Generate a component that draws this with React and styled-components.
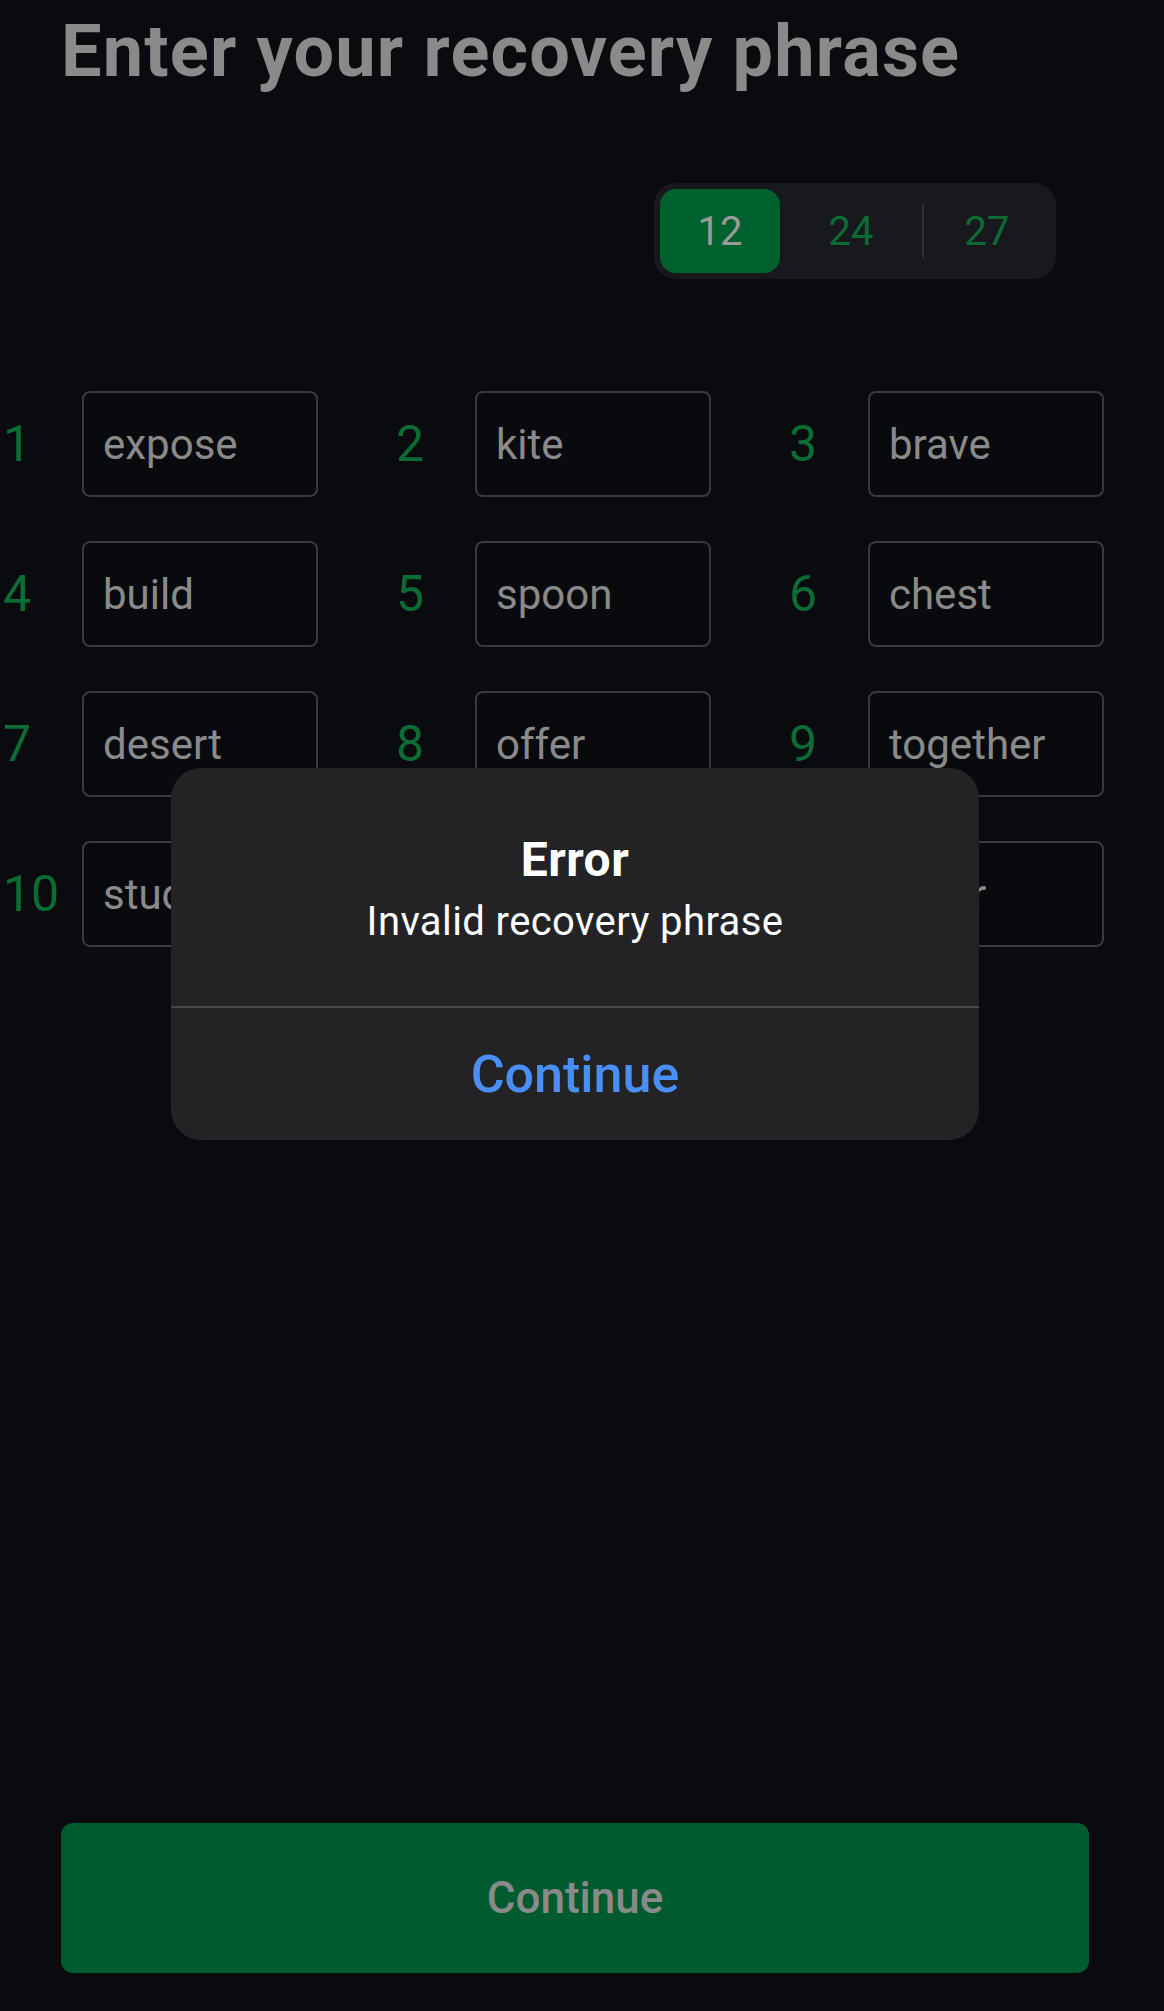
import styled, { createGlobalStyle } from "styled-components";

const words = [
    'expose', 'kite', 'brave',
    'build', 'spoon', 'chest',
    'desert', 'offer', 'together',
    'study', 'valley', 'timer',
];

const sizes = ['12', '24', '27'];

const GlobalStyle = createGlobalStyle`
    html, body {
        margin: 0;
        padding: 0;
        background: #0a0b0f;
    }
    body {
        font-family: Roboto, "Liberation Sans", sans-serif;
    }
`;

const Page = styled.div`
    position: relative;
    width: 1164px;
    min-height: 2011px;
    display: flex;
    flex-direction: column;
    background: #0a0b0f;
    overflow: hidden;
`;

const Title = styled.h1`
    margin: 16px 0 0 61px;
    font-size: 72px;
    line-height: 72px;
    font-weight: 700;
    letter-spacing: 1.2px;
    color: #8a8a8a;
    white-space: nowrap;
`;

const SegmentRow = styled.div`
    display: flex;
    justify-content: flex-end;
    padding-right: 108px;
    margin-top: 95px;
`;

const Segmented = styled.div`
    display: flex;
    align-items: center;
    width: 402px;
    height: 96px;
    box-sizing: border-box;
    padding: 6px;
    border-radius: 22px;
    background: #18191d;
`;

const Segment = styled.div`
    display: flex;
    align-items: center;
    justify-content: center;
    width: ${props => props.$width}px;
    height: 84px;
    border-radius: 16px;
    font-size: 40px;
    color: ${props => props.$active ? '#9a9a9a' : '#0b6b34'};
    background: ${props => props.$active ? '#00612e' : 'transparent'};
`;

const SegmentDivider = styled.div`
    width: 2px;
    height: 54px;
    background: #2e2f33;
`;

const WordGrid = styled.div`
    display: grid;
    grid-template-columns: repeat(3, 318px);
    column-gap: 75px;
    row-gap: 44px;
    margin-top: 112px;
`;

const WordCell = styled.div`
    display: flex;
    align-items: center;
`;

const WordNumber = styled.div`
    width: 82px;
    box-sizing: border-box;
    padding-left: 3px;
    font-size: 50px;
    color: #0b6d35;
`;

const WordBox = styled.div`
    display: flex;
    align-items: center;
    width: 236px;
    height: 106px;
    box-sizing: border-box;
    padding-left: 19px;
    border: 2px solid #393a3e;
    border-radius: 8px;
    background: #090a0d;
    font-size: 42px;
    color: #8a8a8a;
    overflow: hidden;
    white-space: nowrap;
`;

const BottomButton = styled.div`
    display: flex;
    align-items: center;
    justify-content: center;
    margin: auto 75px 38px 61px;
    height: 150px;
    border-radius: 12px;
    background: #005c2f;
    font-size: 44px;
    font-weight: 500;
    color: #8a8a8a;
`;

const Alert = styled.div`
    position: absolute;
    left: 171px;
    top: 768px;
    width: 808px;
    height: 372px;
    display: flex;
    flex-direction: column;
    border-radius: 30px;
    background: #232326;
    overflow: hidden;
`;

const AlertBody = styled.div`
    height: 240px;
    display: flex;
    flex-direction: column;
    align-items: center;
    padding-top: 68px;
    box-sizing: border-box;
    border-bottom: 2px solid #48494d;
    color: #ffffff;
`;

const AlertTitle = styled.div`
    font-size: 48px;
    line-height: 48px;
    font-weight: 700;
    letter-spacing: 0.5px;
`;

const AlertMessage = styled.div`
    margin-top: 18px;
    font-size: 40px;
    line-height: 40px;
    letter-spacing: 0.4px;
`;

const AlertAction = styled.div`
    flex: 1;
    display: flex;
    align-items: center;
    justify-content: center;
    font-size: 52px;
    font-weight: 500;
    color: #4a8ff5;
`;

const App = () => {
    return (
        <Page>
            <GlobalStyle />
            <Title>Enter your recovery phrase</Title>
            <SegmentRow>
                <Segmented>
                    <Segment $active $width={120}>{sizes[0]}</Segment>
                    <Segment $width={142}>{sizes[1]}</Segment>
                    <SegmentDivider />
                    <Segment $width={126}>{sizes[2]}</Segment>
                </Segmented>
            </SegmentRow>
            <WordGrid>
                {words.map((word, i) => (
                    <WordCell key={word}>
                        <WordNumber>{i + 1}</WordNumber>
                        <WordBox>{word}</WordBox>
                    </WordCell>
                ))}
            </WordGrid>
            <BottomButton>Continue</BottomButton>
            <Alert>
                <AlertBody>
                    <AlertTitle>Error</AlertTitle>
                    <AlertMessage>Invalid recovery phrase</AlertMessage>
                </AlertBody>
                <AlertAction>Continue</AlertAction>
            </Alert>
        </Page>
    );
}

export default App;
